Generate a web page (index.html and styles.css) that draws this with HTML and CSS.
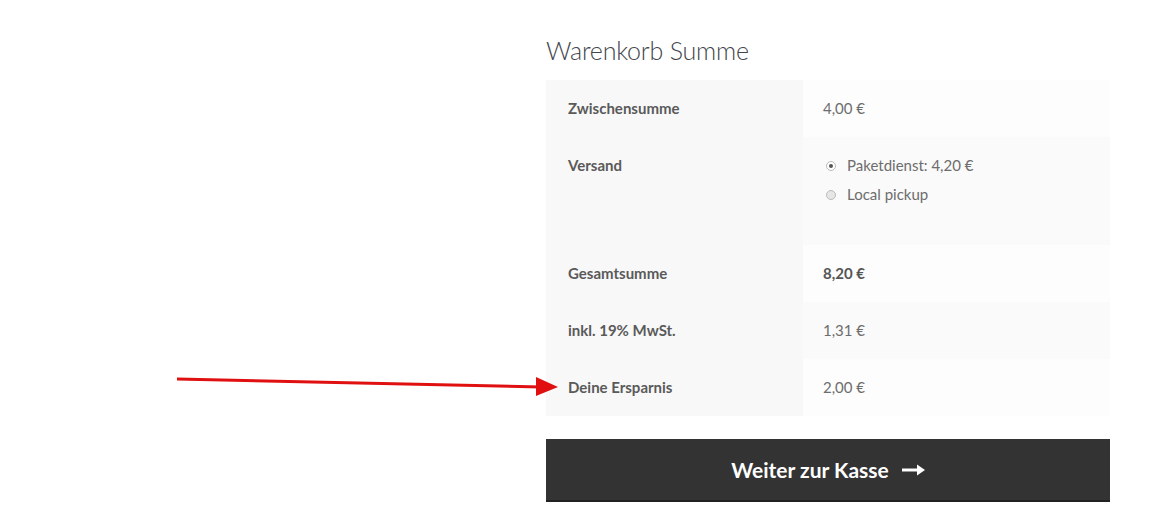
FILE: index.html
```html
<!DOCTYPE html>
<html lang="de">
  <head>
    <meta charset="UTF-8" />
    <meta name="viewport" content="width=device-width, initial-scale=1.0" />
    <title>Warenkorb</title>
    <link rel="stylesheet" href="styles.css">
  </head>
  <body>
    <div class="page">
      <div class="spacer"></div>

      <div class="cart-totals">
        <h2>Warenkorb Summe</h2>
        <table class="totals">
          <tr>
            <th>Zwischensumme</th>
            <td>4,00 €</td>
          </tr>
          <tr>
            <th>Versand</th>
            <td>
              <ul class="shipping">
                <li><span class="radio checked"></span>Paketdienst: 4,20 €</li>
                <li><span class="radio"></span>Local pickup</li>
              </ul>
            </td>
          </tr>
          <tr>
            <th>Gesamtsumme</th>
            <td><strong>8,20 €</strong></td>
          </tr>
          <tr>
            <th>inkl. 19% MwSt.</th>
            <td>1,31 €</td>
          </tr>
          <tr>
            <th>Deine Ersparnis</th>
            <td>2,00 €</td>
          </tr>
        </table>
        <a class="checkout" href="#">
          Weiter zur Kasse
          <svg class="arrow" width="23" height="14" viewBox="0 0 23 14">
            <line x1="0" y1="7" x2="17" y2="7" stroke="#fff" stroke-width="3" />
            <polygon points="15,1.5 23,7 15,12.5" fill="#fff" />
          </svg>
        </a>
      </div>
    </div>

    <!-- red annotation arrow -->
    <svg class="pointer" width="400" height="30" viewBox="0 0 400 30">
      <line x1="1" y1="6" x2="365" y2="14" stroke="#e01010" stroke-width="3" />
      <polygon points="360,4 382,14 360,23" fill="#e01010" />
    </svg>
  </body>
</html>
```

FILE: styles.css
```css
* {
  margin: 0;
  padding: 0;
  box-sizing: border-box;
}
html,
body {
  width: 100%;
  height: 100%;
  background: #fff;
  font-family: "Lato", "Open Sans", sans-serif;
  color: #6d6d6d;
}
.page {
  display: flex;
  padding-top: 33px;
}
.spacer {
  width: 546px;
  flex-shrink: 0;
}
.cart-totals {
  width: 564px;
}
.cart-totals h2 {
  font-weight: 300;
  font-size: 25px;
  line-height: 34px;
  color: #43454b;
  margin-bottom: 13px;
  letter-spacing: -0.2px;
}
.totals {
  width: 100%;
  border-collapse: collapse;
  font-size: 15px;
  line-height: 17px;
}
.totals th {
  width: 257px;
  text-align: left;
  vertical-align: top;
  font-weight: 700;
  color: #5a5a5a;
  background: #f8f8f8;
  padding: 20px 22px;
}
.totals td {
  vertical-align: top;
  background: #fdfdfd;
  padding: 20px 20px;
}
.totals tr:nth-child(2n) td {
  background: #fafafa;
}
.totals td strong {
  color: #555;
}
.shipping {
  list-style: none;
  padding-bottom: 22px;
}
.shipping li {
  display: flex;
  align-items: center;
  margin-bottom: 12px;
}
.shipping li:last-child {
  margin-bottom: 0;
}
.radio {
  width: 10px;
  height: 10px;
  border-radius: 50%;
  border: 1px solid #bbb;
  background: #e6e6e6;
  margin: 0 11px 0 3px;
  position: relative;
}
.radio.checked {
  background: #fff;
}
.radio.checked::after {
  content: "";
  position: absolute;
  left: 2px;
  top: 2px;
  width: 4px;
  height: 4px;
  border-radius: 50%;
  background: #555;
}
.checkout {
  display: flex;
  justify-content: center;
  align-items: center;
  gap: 13px;
  margin-top: 23px;
  height: 63px;
  background: #333;
  color: #fff;
  text-decoration: none;
  font-size: 21px;
  font-weight: 700;
  border-bottom: 2px solid #222;
}
.checkout .arrow {
  margin-top: 1px;
}
.pointer {
  position: absolute;
  left: 176px;
  top: 373px;
}
```
